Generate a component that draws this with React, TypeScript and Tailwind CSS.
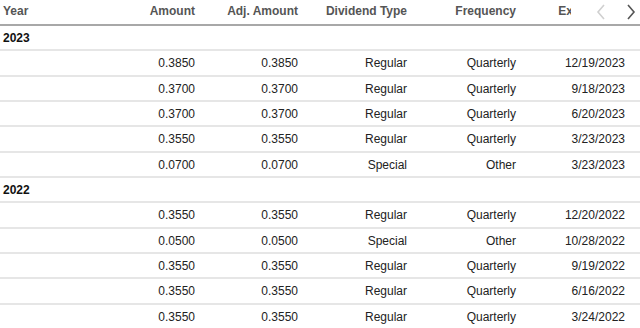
import React from "react";

type Row = {
  amount: string;
  adj: string;
  type: string;
  freq: string;
  exDate: string;
};

const groups: { year: string; rows: Row[] }[] = [
  {
    year: "2023",
    rows: [
      { amount: "0.3850", adj: "0.3850", type: "Regular", freq: "Quarterly", exDate: "12/19/2023" },
      { amount: "0.3700", adj: "0.3700", type: "Regular", freq: "Quarterly", exDate: "9/18/2023" },
      { amount: "0.3700", adj: "0.3700", type: "Regular", freq: "Quarterly", exDate: "6/20/2023" },
      { amount: "0.3550", adj: "0.3550", type: "Regular", freq: "Quarterly", exDate: "3/23/2023" },
      { amount: "0.0700", adj: "0.0700", type: "Special", freq: "Other", exDate: "3/23/2023" },
    ],
  },
  {
    year: "2022",
    rows: [
      { amount: "0.3550", adj: "0.3550", type: "Regular", freq: "Quarterly", exDate: "12/20/2022" },
      { amount: "0.0500", adj: "0.0500", type: "Special", freq: "Other", exDate: "10/28/2022" },
      { amount: "0.3550", adj: "0.3550", type: "Regular", freq: "Quarterly", exDate: "9/19/2022" },
      { amount: "0.3550", adj: "0.3550", type: "Regular", freq: "Quarterly", exDate: "6/16/2022" },
      { amount: "0.3550", adj: "0.3550", type: "Regular", freq: "Quarterly", exDate: "3/24/2022" },
    ],
  },
];

const Chevron = ({ dir, color }: { dir: "left" | "right"; color: string }) => (
  <svg width="10" height="16" viewBox="0 0 10 16" fill="none">
    <path
      d={dir === "left" ? "M8 1 L2 8 L8 15" : "M2 1 L8 8 L2 15"}
      stroke={color}
      strokeWidth="1.6"
    />
  </svg>
);

const DividendTable = () => {
  return (
    <div className="relative w-[640px] h-[328px] overflow-hidden bg-white font-['Liberation_Sans',Arial,sans-serif] text-[12px]">
      {/* Header */}
      <div className="flex h-[26px] border-b-2 border-[#a8a8a8] font-bold text-[#555] pt-[2px]">
        <div className="w-[120px] pl-[3px]">Year</div>
        <div className="w-[75px] text-right">Amount</div>
        <div className="w-[103px] text-right">Adj. Amount</div>
        <div className="w-[109px] text-right">Dividend Type</div>
        <div className="w-[109px] text-right">Frequency</div>
        <div className="w-[109px] text-right whitespace-nowrap">Ex-Div Date</div>
      </div>

      {/* nav arrows over header */}
      <div className="absolute top-0 left-[571px] w-[69px] h-[24px] bg-white flex items-center justify-end gap-[20px] pr-[4px]">
        <Chevron dir="left" color="#d0d0d0" />
        <Chevron dir="right" color="#555" />
      </div>

      {/* Body */}
      {groups.map((g) => (
        <div key={g.year}>
          <div className="flex items-center h-[25.33px] border-b-2 border-[#e6e6e6] font-bold text-[#111] pl-[3px] pt-[1px]">
            {g.year}
          </div>
          {g.rows.map((r, i) => (
            <div
              key={i}
              className="flex items-center h-[25.33px] border-b-2 border-[#e6e6e6] text-[#222] pt-[1px]"
            >
              <div className="w-[120px]" />
              <div className="w-[75px] text-right">{r.amount}</div>
              <div className="w-[103px] text-right">{r.adj}</div>
              <div className="w-[109px] text-right">{r.type}</div>
              <div className="w-[109px] text-right">{r.freq}</div>
              <div className="w-[109px] text-right">{r.exDate}</div>
            </div>
          ))}
        </div>
      ))}
    </div>
  );
};

export default DividendTable;
